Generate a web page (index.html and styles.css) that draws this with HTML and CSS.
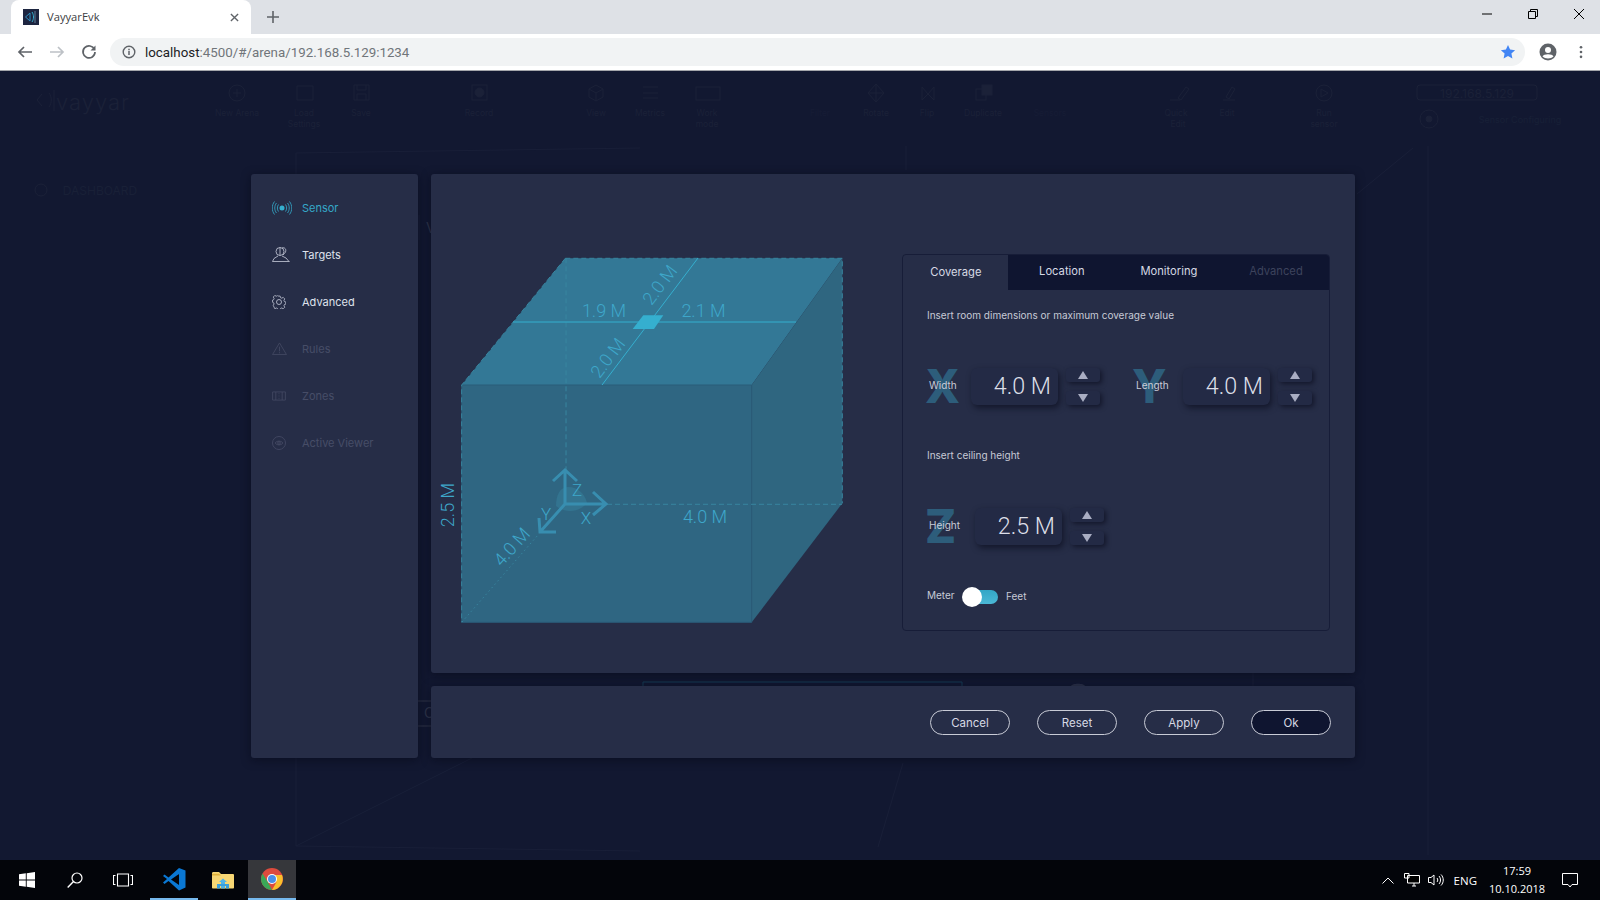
FILE: index.html
```html
<!DOCTYPE html>
<html lang="en">
<head>
<meta charset="utf-8">
<title>VayyarEvk</title>
<link rel="stylesheet" href="styles.css">
</head>
<body>
<header class="tabstrip">
  <div class="tab">
    <svg class="favicon" viewBox="0 0 16 16"><rect width="16" height="16" fill="#1d2540"/><path d="M7 4 2.500 8 7 12V4Z" fill="none" stroke="#2f8fc0"/><path d="M9 3c2 3 2 7 0 10" fill="none" stroke="#35afcf"/><path d="M12 2v12" stroke="#7fa5c0" stroke-width=".7"/></svg>
    <span class="tab-title">VayyarEvk</span>
    <svg class="tab-close" viewBox="0 0 10 10"><path d="M1 1l8 8M9 1l-8 8" stroke="#5f6368" stroke-width="1.500"/></svg>
  </div>
  <svg class="newtab" viewBox="0 0 12 12"><path d="M6 0v12M0 6h12" stroke="#5f6368" stroke-width="1.600"/></svg>
  <div class="winctl">
    <svg viewBox="0 0 12 12"><path d="M1 6h10" stroke="#000"/></svg>
    <svg viewBox="0 0 12 12"><path d="M1.500 3.500h7v7h-7zM3.500 3.500v-2h7v7h-2" fill="none" stroke="#000"/></svg>
    <svg viewBox="0 0 12 12"><path d="M1 1l10 10M11 1 1 11" stroke="#000"/></svg>
  </div>
</header>
<nav class="toolbar">
  <svg class="tb-icon" viewBox="0 0 16 16"><path d="M15 8H2M7 3 2 8l5 5" fill="none" stroke="#5f6368" stroke-width="1.700"/></svg>
  <svg class="tb-icon" viewBox="0 0 16 16"><path d="M1 8h13M9 3l5 5-5 5" fill="none" stroke="#bdc1c6" stroke-width="1.700"/></svg>
  <svg class="tb-icon" viewBox="0 0 16 16"><path d="M13.500 5.500A6 6 0 1 0 14 8" fill="none" stroke="#5f6368" stroke-width="1.700"/><path d="M14.500 1.500v5h-5z" fill="#5f6368"/></svg>
  <div class="omnibox">
    <svg class="info" viewBox="0 0 14 14"><circle cx="7" cy="7" r="5.800" fill="none" stroke="#5f6368" stroke-width="1.400"/><path d="M7 6v4M7 3.700v1.500" stroke="#5f6368" stroke-width="1.500"/></svg>
    <span class="url"><span class="host">localhost</span>:4500/#/arena/192.168.5.129:1234</span>
    <svg class="star" viewBox="0 0 16 16"><path d="M8 1l2.100 4.600 5 .6-3.700 3.400 1 5L8 11.900 3.600 14.600l1-5L.9 6.200l5-.6z" fill="#4285f4"/></svg>
  </div>
  <svg class="avatar" viewBox="0 0 18 18"><circle cx="9" cy="9" r="8.500" fill="#5f6368"/><circle cx="9" cy="7" r="3" fill="#fff"/><path d="M3.500 13.500c1-3 10-3 11 0-2.500 2.500-8.500 2.500-11 0z" fill="#fff"/></svg>
  <svg class="kebab" viewBox="0 0 4 16"><circle cx="2" cy="2.500" r="1.500" fill="#5f6368"/><circle cx="2" cy="8" r="1.500" fill="#5f6368"/><circle cx="2" cy="13.500" r="1.500" fill="#5f6368"/></svg>
</nav>
<main class="app">
  <svg class="backdrop" viewBox="0 71 1600 789">
    <g class="bg-line">
      <path d="M296 153 640 148M296 153V846M296 846 640 851M296 846 472 758M1428 146V855M1413 148 1357 194M906 146V170M903 763 878 847M1253 673V686M419 215V240"/>
    </g>
    <path class="bg-edge" d="M418 701H431M418 726H431"/>
    <path class="bg-teal" d="M643 686V682H962V686"/>
    <path class="bg-bump" d="M1071 686C1072 683 1084 683 1085 686Z"/>
    <g class="bg-text">
      <text x="237" y="116">New Arena</text>
      <text x="304" y="116">Load</text><text x="304" y="127">Settings</text>
      <text x="361" y="116">Save</text>
      <text x="479" y="116">Record</text>
      <text x="596" y="116">View</text>
      <text x="650" y="116">Metrics</text>
      <text x="707" y="116">Work</text><text x="707" y="127">mode</text>
      <text x="820" y="116" class="bg-dim">Filter</text>
      <text x="876" y="116">Rotate</text>
      <text x="927" y="116">Flip</text>
      <text x="983" y="116">Duplicate</text>
      <text x="1050" y="116" class="bg-dim">Sensors</text>
      <text x="1176" y="116">Quick</text><text x="1178" y="127">Edit</text>
      <text x="1227" y="116">Edit</text>
      <text x="1324" y="116">Run</text><text x="1324" y="127">sensor</text>
      <text x="1520" y="123" class="bg-status">Sensor Configuring</text>
      <text x="1477" y="98" class="bg-ip">192.168.5.129</text>
      <text x="100" y="195" class="bg-dash">DASHBOARD</text>
      <text x="93" y="110" class="bg-logo">vayyar</text>
      <text x="426" y="233" class="bg-cut">V</text>
      <text x="424" y="718" class="bg-cut">C</text>
    </g>
    <g class="bg-icon">
      <circle cx="237" cy="93" r="8"/><path d="M233 93h8M237 89v8"/>
      <path d="M297 86h16v14h-16z"/>
      <path d="M354 85h15v15h-15zM357 85v5h9v-5M357 100v-6h9v6"/>
      <rect x="472" y="85" width="15" height="15"/><circle cx="479.500" cy="92.500" r="4.500" class="bg-fill"/>
      <path d="M596 85l7 4v8l-7 4-7-4v-8zM589 89l7 4 7-4M596 93v8"/>
      <path d="M643 87h15M643 93h15M643 98h15"/>
      <rect x="696" y="87" width="24" height="13"/>
      <path d="M876 84l8 9-8 9-8-9zM876 84v18M868 93h16"/>
      <path d="M922 87v13l6-6zM934 87v13l-6-6z"/>
      <rect x="976" y="89" width="10" height="11"/><rect x="982" y="85" width="10" height="10" class="bg-fill"/>
      <path d="M1170 100h10M1178 98l8-11 3 2-8 11z"/>
      <path d="M1223 100h12M1226 97l6-10 3 2-6 10z"/>
      <circle cx="1324" cy="93" r="8"/><path d="M1321 89l7 4-7 4z"/>
      <rect x="1417" y="85" width="120" height="15" rx="3"/>
      <circle cx="1429" cy="119" r="9"/><circle cx="1429" cy="119" r="3" class="bg-fill"/>
      <path d="M42 94l-5 6 5 6M49 93c3 4 3 10 0 14M54 90v21"/>
      <circle cx="41" cy="190" r="6"/>
    </g>
  </svg>

  <div class="overlay">
    <aside class="side">
      <a class="side-item is-active">
        <svg class="side-icon icon-sensor" viewBox="0 0 20 14"><circle cx="10" cy="7" r="2.500" fill="#35afcf" stroke="none"/><path d="M6.500 3.500c-1.500 2-1.500 5 0 7M13.500 3.500c1.500 2 1.500 5 0 7M4.500 2c-2.300 3-2.300 7 0 10M15.500 2c2.300 3 2.300 7 0 10M2.500.500c-3 4-3 9 0 13M17.500.500c3 4 3 9 0 13"/></svg>
        <span>Sensor</span>
      </a>
      <a class="side-item is-on">
        <svg class="side-icon icon-targets" viewBox="0 0 18 15"><circle cx="8" cy="4.500" r="4"/><path d="M10 1c3-1 4.500 1.500 3.500 4-.5 1-1.500 2-2.500 3M8 .5v8M.5 14.500l1.500-3 4-2.500M10 9l4 2 3 3.500M.5 14.500h17"/></svg>
        <span>Targets</span>
      </a>
      <a class="side-item is-on">
        <svg class="side-icon icon-gear" viewBox="0 0 14 14"><circle cx="7" cy="7" r="2.500"/><path d="M5.800.7h2.400l.4 1.700 1.400.6 1.500-.9 1.700 1.700-.9 1.500.6 1.400 1.400.3v2.400l-1.400.4-.6 1.400.9 1.500-1.700 1.700-1.500-.9-1.400.6-.4 1.400H5.800l-.4-1.400-1.400-.6-1.500.9L.8 10.700l.9-1.500-.6-1.400-1-.4V5l1-.3.6-1.400-.9-1.500L2.500 0l1.500.9 1.400-.6z" transform="translate(.5 .4) scale(.93)"/></svg>
        <span>Advanced</span>
      </a>
      <a class="side-item">
        <svg class="side-icon icon-rules" viewBox="0 0 16 14"><path d="M8 1l7.500 12.500H.5zM8 5v5M8 11v1.200"/></svg>
        <span>Rules</span>
      </a>
      <a class="side-item">
        <svg class="side-icon icon-zones" viewBox="0 0 15 11"><path d="M.5 1h14v9H.5zM4 1v9M11 1v9M7.500 2.500v1M7.500 5v1M7.500 7.500v1"/></svg>
        <span>Zones</span>
      </a>
      <a class="side-item">
        <svg class="side-icon icon-gear" viewBox="0 0 14 14"><circle cx="7" cy="7" r="6.500"/><path d="M3 7c2-2.500 6-2.500 8 0-2 2.500-6 2.500-8 0z"/><circle cx="7" cy="7" r="1.300"/></svg>
        <span>Active Viewer</span>
      </a>
    </aside>

    <div class="right">
      <section class="panel">
        <svg class="room" viewBox="431 174 471 499">
          <path class="f-top" d="M565.300 258.300H842.300L751.700 385H461.700Z"/>
          <path class="f-right" d="M842.300 258.300V503.300L751.700 622.300V385Z"/>
          <path class="f-front" d="M461.700 385H751.700V622.300H461.700Z"/>
          <path class="dash" d="M565.300 258.300H842.300V503.300M565.300 258.300 461.700 385V622.300M566 258.300V470M607 504.300H842"/>
          <path class="dot" d="M462 622 538 535"/>
          <path class="ray" d="M513 322H796M602 385 698 258"/>
          <path class="sensor" d="M632.700 329H654L663.300 315.300H643.300Z"/>
          <path class="sector" d="M556 506C556 495 560 487 568 487 578 487 585 494 587 503 580 512 566 514 556 506Z"/>
          <path class="axes" d="M565 504V471M553 481 565 470 577 481M565 504H605M593 492 606 504 593 515M565 504 540 532M539 518 540 532 556 532"/>
          <g class="dim">
            <text x="604" y="317">1.9 M</text>
            <text x="703.500" y="317">2.1 M</text>
            <text x="705" y="523">4.0 M</text>
            <text transform="translate(660 285) rotate(-53)" y="6">2.0 M</text>
            <text transform="translate(608 358) rotate(-53)" y="6">2.0 M</text>
            <text transform="translate(512 547) rotate(-48)" y="6">4.0 M</text>
            <text transform="translate(448 505) rotate(-90)" y="6">2.5 M</text>
          </g>
          <g class="axis-name">
            <text x="577" y="496">Z</text>
            <text x="586" y="524">X</text>
            <text x="546" y="520">Y</text>
          </g>
        </svg>
        <div class="settings">
          <div class="tabs">
            <button class="tab-btn is-current">Coverage</button>
            <button class="tab-btn">Location</button>
            <button class="tab-btn">Monitoring</button>
            <button class="tab-btn is-off">Advanced</button>
          </div>
          <div class="tab-body">
            <p class="hint">Insert room dimensions or maximum coverage value</p>
            <div class="fields">
              <div class="field">
                <div class="axis axis-x"><b class="letter">X</b><span class="axis-label">Width</span></div>
                <div class="value">4.0 M</div>
                <div class="spin">
                  <div class="spin-btn"><i class="tri-up"></i></div>
                  <div class="spin-btn"><i class="tri-down"></i></div>
                </div>
              </div>
              <div class="field">
                <div class="axis axis-y"><b class="letter">Y</b><span class="axis-label">Length</span></div>
                <div class="value">4.0 M</div>
                <div class="spin">
                  <div class="spin-btn"><i class="tri-up"></i></div>
                  <div class="spin-btn"><i class="tri-down"></i></div>
                </div>
              </div>
            </div>
            <p class="hint hint-2">Insert ceiling height</p>
            <div class="fields">
              <div class="field">
                <div class="axis axis-z"><b class="letter">Z</b><span class="axis-label">Height</span></div>
                <div class="value">2.5 M</div>
                <div class="spin">
                  <div class="spin-btn"><i class="tri-up"></i></div>
                  <div class="spin-btn"><i class="tri-down"></i></div>
                </div>
              </div>
            </div>
            <div class="units">
              <span class="unit-m">Meter</span>
              <span class="switch"><i class="knob"></i></span>
              <span class="unit-f">Feet</span>
            </div>
          </div>
        </div>
      </section>
      <footer class="actions">
        <button class="pill">Cancel</button>
        <button class="pill">Reset</button>
        <button class="pill">Apply</button>
        <button class="pill is-primary">Ok</button>
      </footer>
    </div>
  </div>
</main>
<footer class="taskbar">
  <div class="task">
    <svg class="t-start" viewBox="0 0 16 16"><path d="M0 2.300 6.800 1.300V7.500H0ZM7.700 1.200 16 0V7.500H7.700ZM0 8.500H6.800V14.700L0 13.700ZM7.700 8.500H16V16L7.700 14.800Z" fill="#fff"/></svg>
  </div>
  <div class="task">
    <svg class="t-search" viewBox="0 0 16 16"><circle cx="10" cy="6" r="5" fill="none" stroke="#fff" stroke-width="1.200"/><path d="M6.500 9.500.7 15.500" stroke="#fff" stroke-width="1.400"/></svg>
  </div>
  <div class="task">
    <svg class="t-view" viewBox="0 0 20 14"><path d="M4.500 1h11v12h-11zM2.500 2.500H.5v9h2M17.500 2.500h2v9h-2" fill="none" stroke="#fff" stroke-width="1.100"/></svg>
  </div>
  <div class="task task-open task-code">
    <svg class="t-code" viewBox="0 0 24 24"><path d="M17 1V23.500L23.500 20.500V3.500ZM1 9 2.500 7.500 6.500 10.500 17 1V7L9 12.500 17 18V23.500L6.500 14 2.500 17 1 15.500 5 12Z" fill="#0a78d4"/></svg>
  </div>
  <div class="task task-files">
    <svg class="t-folder" viewBox="0 0 22 18"><path d="M0 2.500C0 1.500.5 1 1.500 1H7L9 3H21C21.500 3 22 3.500 22 4V16.500C22 17.200 21.500 17.500 21 17.500H1C.5 17.500 0 17.200 0 16.500Z" fill="#f7d774"/><path d="M0 4.500H9L7 2.800H0Z" fill="#e0b23c"/><path d="M7 11 11 7.500 15 11H13V17.500H9V11Z" fill="#4fb3e8"/><path d="M5 13H17V17.500H14V15H8V17.500H5Z" fill="#3aa0dc"/></svg>
  </div>
  <div class="task task-open task-chrome">
    <svg class="t-chrome" viewBox="0 0 22 22"><circle cx="11" cy="11" r="11" fill="#dd4b3e"/><path d="M11 22A11 11 0 0 1 1.500 5.500L6.500 13.500 11 22Z" fill="#3aa757"/><path d="M11 22 15.500 14 11 7H21A11 11 0 0 1 11 22Z" fill="#f9c02c"/><circle cx="11" cy="11" r="5" fill="#fff"/><circle cx="11" cy="11" r="4" fill="#4a90e8"/></svg>
  </div>
  <div class="tray">
    <svg class="t-chev" viewBox="0 0 12 7"><path d="M.5 6.500 6 1l5.500 5.500" fill="none" stroke="#fff"/></svg>
    <svg class="t-net" viewBox="0 0 16 14"><path d="M3.500 2.500H15.500V10H3.500ZM8 13H12M10 10V13M.5.500H5V5H.5Z" fill="#000" stroke="#fff"/></svg>
    <svg class="t-vol" viewBox="0 0 16 14"><path d="M.5 4.500H3L6 2V12L3 9.500H.5ZM9 5c1 1.200 1 2.800 0 4M11 3c2 2.500 2 5.500 0 8M13 1.500c3 3 3 8 0 11" fill="none" stroke="#fff"/></svg>
    <span class="t-lang">ENG</span>
    <div class="t-clock"><span>17:59</span><span>10.10.2018</span></div>
    <svg class="t-note" viewBox="0 0 16 15"><path d="M.5.500H15.500V11.500H10L8 14 6 11.500H.5Z" fill="none" stroke="#fff"/></svg>
  </div>
</footer>
</body>
</html>
```

FILE: styles.css
```css
* { box-sizing: border-box; }
html, body { margin: 0; padding: 0; }
body {
  width: 1600px;
  height: 900px;
  overflow: hidden;
  display: flex;
  flex-direction: column;
  font-family: "Inter", "Liberation Sans", sans-serif;
  background: #121831;
}
svg { display: block; flex: none; }

/* browser chrome */
.tabstrip {
  height: 34px;
  flex: none;
  display: flex;
  align-items: center;
  background: #dee1e6;
  padding-left: 11px;
}
.tab {
  width: 240px;
  height: 34px;
  display: flex;
  align-items: center;
  background: #fff;
  border-radius: 8px 8px 0 0;
  padding: 0 12px;
}
.favicon { width: 16px; height: 16px; }
.tab-title {
  margin: 0 0 2px 8px;
  font: 11.200px "Open Sans", "Liberation Sans", sans-serif;
  color: #3c4043;
  flex: 1;
}
.tab-close { width: 9px; height: 9px; }
.newtab { width: 12px; height: 12px; margin-left: 16px; }
.winctl {
  margin-left: auto;
  margin-right: 15px;
  display: flex;
  gap: 34px;
  align-self: flex-start;
  padding-top: 8px;
}
.winctl svg { width: 12px; height: 12px; }
.toolbar {
  height: 37px;
  flex: none;
  display: flex;
  align-items: center;
  background: #fff;
  border-bottom: 1px solid #a4a6ab;
  padding: 0 0 0 17px;
}
.tb-icon { width: 16px; height: 16px; margin-right: 16px; }
.omnibox {
  width: 1415px;
  height: 28px;
  margin-left: -3px;
  border-radius: 14px;
  background: #f1f3f4;
  display: flex;
  align-items: center;
  padding: 0 9px 0 12px;
}
.info { width: 14px; height: 14px; }
.url {
  margin-left: 9px;
  font: 13.330px "Roboto", "Liberation Sans", sans-serif;
  color: #70757a;
}
.host { color: #202124; }
.star { width: 16px; height: 16px; margin-left: auto; }
.avatar { width: 18px; height: 18px; margin-left: 14px; }
.kebab { width: 4px; height: 14px; margin-left: 22px; }

/* app */
.app { position: relative; flex: 1; min-height: 0; background: #121831; }
.backdrop { width: 1600px; height: 789px; }
.bg-line path { fill: none; stroke: #191f38; stroke-width: 1; }
.bg-edge { fill: none; stroke: #2e3449; }
.bg-teal { fill: none; stroke: #143a55; }
.bg-bump { fill: #2a3048; }
.bg-text text {
  font: 8.500px "Inter", "Liberation Sans", sans-serif;
  fill: #1b2138;
  text-anchor: middle;
}
.bg-text .bg-dim { fill: #161c35; }
.bg-text .bg-status { font-size: 9px; fill: #182037; }
.bg-text .bg-ip { font-size: 12px; }
.bg-text .bg-dash { font-size: 12px; fill: #192037; }
.bg-text .bg-logo { font-size: 22px; font-weight: 300; letter-spacing: 1px; }
.bg-text .bg-cut { font-size: 14px; fill: #2e3449; text-anchor: start; }
.bg-icon * { fill: none; stroke: #1b2138; }
.bg-icon .bg-fill { fill: #1b2138; }

.overlay {
  position: absolute;
  inset: 0;
  padding: 103px 0 0 251px;
  display: flex;
  align-items: flex-start;
  gap: 13px;
}
.side {
  width: 167px;
  height: 584px;
  background: #262d47;
  border-radius: 3px;
  box-shadow: 0 2px 10px rgba(5, 8, 22, .55);
  padding-top: 10px;
}
.side-item {
  height: 47px;
  display: flex;
  align-items: center;
  padding-left: 21px;
  font-size: 11px;
  color: #474d67;
}
.side-item span { margin-left: auto; width: 116px; }
.side-icon {
  fill: none;
  stroke: #474d67;
  stroke-width: .8;
}
.icon-sensor { width: 20px; height: 14px; }
.icon-targets { width: 18px; height: 15px; }
.icon-gear { width: 14px; height: 14px; }
.icon-rules { width: 15px; height: 13px; }
.icon-zones { width: 14px; height: 10px; }
.is-on { color: #dfe2ec; }
.is-on .side-icon { stroke: #c9cddc; }
.is-active { color: #35a8c8; }
.is-active .side-icon { stroke: #35afcf; }

.right {
  width: 924px;
  display: flex;
  flex-direction: column;
  gap: 13px;
}
.panel {
  height: 499px;
  display: flex;
  background: #262d47;
  border-radius: 3px;
  box-shadow: 0 2px 10px rgba(5, 8, 22, .55);
}
.room { width: 471px; height: 499px; }
.f-top { fill: #337896; }
.f-right { fill: #2f6680; }
.f-front { fill: #2f6682; stroke: #2b5c78; stroke-width: 1; }
.dash { fill: none; stroke: #38859f; stroke-width: 1; stroke-dasharray: 5 3; }
.dot { fill: none; stroke: #38859f; stroke-width: 1; stroke-dasharray: 1.500 3; }
.ray { fill: none; stroke: #35afcf; stroke-width: 1; }
.sensor { fill: #35afcf; }
.sector { fill: #337490; }
.axes { fill: none; stroke: #388eb0; stroke-width: 3; }
.dim text {
  font: 300 18px "Roboto", "Liberation Sans", sans-serif;
  fill: #3ea7ca;
  text-anchor: middle;
}
.axis-name text {
  font: 300 17px "Roboto", "Liberation Sans", sans-serif;
  fill: #3ea7ca;
  text-anchor: middle;
}

.settings {
  width: 428px;
  height: 377px;
  margin-top: 80px;
  border: 1px solid #171d38;
  border-radius: 4px;
  display: flex;
  flex-direction: column;
  overflow: hidden;
}
.tabs {
  height: 35px;
  flex: none;
  display: flex;
  background: #0f1530;
}
.tab-btn {
  width: 107.300px;
  border: 0;
  padding: 0 0 3px 1px;
  background: transparent;
  color: #d6d9e4;
  font: 11.200px "Inter", "Liberation Sans", sans-serif;
}
.tab-btn.is-current {
  width: 105px;
  background: #262d47;
  padding-bottom: 2px;
}
.tab-btn.is-off { color: #3d435c; }
.tab-body { padding: 18px 0 0 24px; }
.hint {
  margin: 0 0 46px;
  height: 14px;
  line-height: 14px;
  font-size: 10px;
  color: #c7cad6;
}
.hint-2 { margin-top: 43px; }
.fields { display: flex; height: 37px; }
.field { display: flex; }
.axis {
  display: grid;
  justify-items: start;
  align-items: center;
}
.axis > * { grid-area: 1 / 1; }
.axis-x { width: 44px; }
.axis-y { width: 49px; margin-left: 34px; }
.axis-z { width: 48px; }
.letter {
  margin-left: -2px;
  font: 800 46px/37px "Inter", "Liberation Sans", sans-serif;
  color: #2d5d7b;
}
.axis-label {
  margin: -4px 0 0 2px;
  font-size: 10px;
  color: #c9ccd8;
}
.value {
  width: 87px;
  height: 37px;
  background: #232a45;
  border-radius: 6px;
  box-shadow: 2px 3px 6px rgba(6, 9, 24, .6);
  color: #dcdfe8;
  font: 300 23.300px/37px "Roboto", "Liberation Sans", sans-serif;
  text-align: right;
  padding-right: 7px;
}
.spin {
  width: 34px;
  margin-left: 8px;
  display: flex;
  flex-direction: column;
  justify-content: space-between;
}
.spin-btn {
  height: 14px;
  background: #232a45;
  border-radius: 3px;
  box-shadow: 2px 2px 5px rgba(6, 9, 24, .6);
  display: flex;
  align-items: center;
  justify-content: center;
}
.tri-up, .tri-down {
  width: 0;
  height: 0;
  border-left: 5.500px solid transparent;
  border-right: 5.500px solid transparent;
}
.tri-up { border-bottom: 8px solid #a9adc2; }
.tri-down { border-top: 8px solid #a9adc2; }
.units {
  margin-top: 42px;
  height: 20px;
  display: flex;
  align-items: center;
  font-size: 10px;
  color: #c7cad6;
}
.unit-m { width: 35px; margin-top: -5px; }
.unit-f { margin-left: 8px; margin-top: -3px; }
.switch {
  position: relative;
  width: 35px;
  height: 14px;
  margin-left: 1px;
  border-radius: 7px;
  background: linear-gradient(#33a6c6, #4bb8d6);
}
.knob {
  position: absolute;
  left: -1px;
  top: -3px;
  width: 20px;
  height: 20px;
  border-radius: 50%;
  background: #fff;
}
.actions {
  height: 72px;
  display: flex;
  align-items: center;
  justify-content: flex-end;
  gap: 27px;
  padding-right: 24px;
  background: #262d47;
  border-radius: 3px;
  box-shadow: 0 2px 10px rgba(5, 8, 22, .55);
}
.pill {
  width: 80px;
  height: 25px;
  border: 1px solid #c8cbd6;
  border-radius: 13px;
  background: transparent;
  color: #d6d9e4;
  font: 11.500px "Inter", "Liberation Sans", sans-serif;
  padding: 2px 0 0;
}
.pill.is-primary { background: #0f1530; }

/* taskbar */
.taskbar {
  height: 40px;
  flex: none;
  display: flex;
  background: #03050a;
  padding-left: 3px;
}
.task {
  width: 48px;
  height: 40px;
  display: flex;
  align-items: center;
  justify-content: center;
}
.task-code { margin-left: 3px; border-bottom: 2px solid #76b9ed; }
.task-files { margin-left: 1px; }
.task-chrome {
  margin-left: 1px;
  background: #36373b;
  border-bottom: 2px solid #76b9ed;
}
.t-start { width: 16px; height: 16px; }
.t-search { width: 16px; height: 16px; }
.t-view { width: 20px; height: 14px; }
.t-code { width: 24px; height: 24px; }
.t-folder { width: 22px; height: 18px; }
.t-chrome { width: 22px; height: 22px; }
.tray {
  margin-left: auto;
  height: 40px;
  display: flex;
  align-items: center;
  color: #fff;
  font: 11.500px "Open Sans", "Liberation Sans", sans-serif;
}
.t-chev { width: 12px; height: 7px; }
.t-net { width: 16px; height: 14px; margin-left: 10px; }
.t-vol { width: 16px; height: 14px; margin-left: 8px; }
.t-lang { margin-left: 10px; }
.t-clock {
  width: 54px;
  margin-left: 13px;
  display: flex;
  flex-direction: column;
  align-items: center;
  font-size: 11px;
  line-height: 18px;
}
.t-note { width: 16px; height: 15px; margin-left: 18px; margin-right: 22px; }
```
